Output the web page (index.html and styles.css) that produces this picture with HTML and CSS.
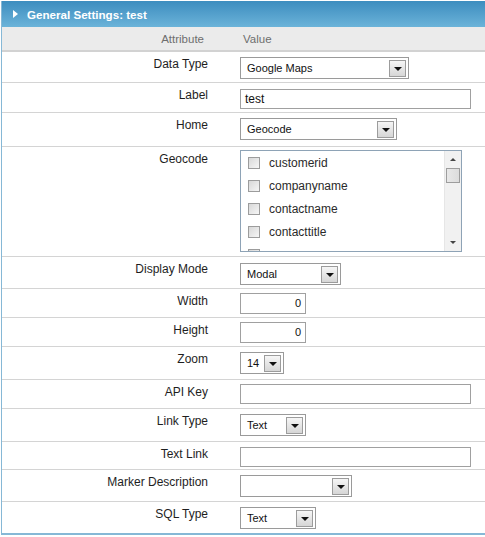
FILE: index.html
```html
<!DOCTYPE html>
<html>
<head>
<meta charset="utf-8">
<link rel="stylesheet" href="styles.css">
</head>
<body>
<div class="panel">
  <div class="panel-head"><span class="tri"></span><span class="title">General Settings: test</span></div>
  <div class="grid">
    <div class="row head">
      <div class="c1">Attribute</div><div class="c2">Value</div>
    </div>
    <div class="row h31">
      <div class="c1">Data Type</div>
      <div class="c2 t5"><div class="sel w169"><span class="sel-text">Google Maps</span><span class="arr"></span></div></div>
    </div>
    <div class="row h30">
      <div class="c1">Label</div>
      <div class="c2 t6"><div class="inp w231">test</div></div>
    </div>
    <div class="row h34">
      <div class="c1">Home</div>
      <div class="c2 t5"><div class="sel w157"><span class="sel-text">Geocode</span><span class="arr"></span></div></div>
    </div>
    <div class="row h110">
      <div class="c1">Geocode</div>
      <div class="c2 t3">
        <div class="listbox">
          <div class="items">
            <div class="item"><span class="cb"></span>customerid</div>
            <div class="item"><span class="cb"></span>companyname</div>
            <div class="item"><span class="cb"></span>contactname</div>
            <div class="item"><span class="cb"></span>contacttitle</div>
            <div class="item"><span class="cb"></span></div>
          </div>
          <div class="sbar">
            <span class="sb-up"></span>
            <span class="sb-thumb"></span>
            <span class="sb-fill"></span>
            <span class="sb-down"></span>
          </div>
        </div>
      </div>
    </div>
    <div class="row h32">
      <div class="c1">Display Mode</div>
      <div class="c2 t6"><div class="sel w101"><span class="sel-text">Modal</span><span class="arr"></span></div></div>
    </div>
    <div class="row h29">
      <div class="c1">Width</div>
      <div class="c2 t4"><div class="inp w66 num">0</div></div>
    </div>
    <div class="row h29">
      <div class="c1">Height</div>
      <div class="c2 t4"><div class="inp w66 num">0</div></div>
    </div>
    <div class="row h33">
      <div class="c1">Zoom</div>
      <div class="c2 t5"><div class="sel w44"><span class="sel-text">14</span><span class="arr"></span></div></div>
    </div>
    <div class="row h29">
      <div class="c1">API Key</div>
      <div class="c2 t4"><div class="inp w231"></div></div>
    </div>
    <div class="row h33">
      <div class="c1">Link Type</div>
      <div class="c2 t5"><div class="sel w66"><span class="sel-text">Text</span><span class="arr"></span></div></div>
    </div>
    <div class="row h28">
      <div class="c1">Text Link</div>
      <div class="c2 t5"><div class="inp w231"></div></div>
    </div>
    <div class="row h32">
      <div class="c1">Marker Description</div>
      <div class="c2 t5"><div class="sel w112"><span class="sel-text"></span><span class="arr"></span></div></div>
    </div>
    <div class="row h31 last">
      <div class="c1">SQL Type</div>
      <div class="c2 t5"><div class="sel w76"><span class="sel-text">Text</span><span class="arr"></span></div></div>
    </div>
  </div>
</div>
</body>
</html>
```
FILE: styles.css
```css
html, body {
  margin: 0;
  padding: 0;
  background: #ffffff;
  overflow: hidden;
}
body {
  font-family: "Liberation Sans", Arial, sans-serif;
  font-size: 12px;
  color: #222;
}
.panel {
  margin: 1px 0 0 1px;
  border-left: 1px solid #86b8d6;
  border-bottom: 2px solid #86b8d6;
}
.panel-head {
  height: 26px;
  display: flex;
  align-items: center;
  background: linear-gradient(#3d8dbf, #6bb3d9);
  color: #fff;
  font-weight: bold;
  font-size: 11.6px;
}
.tri {
  width: 0;
  height: 0;
  border-top: 4px solid transparent;
  border-bottom: 4px solid transparent;
  border-left: 5px solid #fff;
  margin: 0 9px 0 11px;
}
.grid {
  display: flex;
  flex-direction: column;
}
.row {
  display: flex;
  box-sizing: border-box;
  border-bottom: 1px solid #d4d4d4;
  line-height: 14px;
}
.row.last { border-bottom: none; }
.c1 {
  box-sizing: border-box;
  width: 230px;
  flex: none;
  text-align: right;
  padding: 5px 24px 0 0;
  color: #1e1e1e;
}
.c2 {
  flex: 1;
  padding-left: 8px;
}
.row.head {
  height: 25px;
  background: #ebebeb;
  border-bottom: 2px solid #d2d2d2;
  color: #6e6e6e;
  font-size: 11.5px;
  align-items: center;
}
.row.head .c1 {
  padding: 0 28px 0 0;
  color: #6e6e6e;
}
.row.head .c2 { padding-left: 11px; }
.t3 { padding-top: 3px; }
.t4 { padding-top: 4px; }
.t5 { padding-top: 5px; }
.t6 { padding-top: 6px; }
.h28 { height: 28px; }
.h29 { height: 29px; }
.h30 { height: 30px; }
.h31 { height: 31px; }
.h32 { height: 32px; }
.h33 { height: 33px; }
.h34 { height: 34px; }
.h110 { height: 110px; }

/* select box */
.sel {
  box-sizing: border-box;
  height: 22px;
  border: 1px solid #9a9a9a;
  background: #fff;
  display: flex;
  align-items: center;
  padding: 0 2px 0 6px;
  font-size: 11px;
  color: #111;
}
.sel-text { flex: 1; }
.arr {
  box-sizing: border-box;
  width: 17px;
  height: 17px;
  border: 1px solid #9c9c9c;
  background: linear-gradient(#f6f6f6, #d6d6d6);
  display: flex;
  align-items: center;
  justify-content: center;
}
.arr::after {
  content: "";
  width: 0;
  height: 0;
  border-left: 4px solid transparent;
  border-right: 4px solid transparent;
  border-top: 4px solid #111;
  margin-top: 1px;
}
.w44 { width: 44px; }
.w66 { width: 66px; }
.w76 { width: 76px; }
.w101 { width: 101px; }
.w112 { width: 112px; }
.w157 { width: 157px; }
.w169 { width: 169px; }
.w231 { width: 231px; }

/* input */
.inp {
  box-sizing: border-box;
  height: 20px;
  border: 1px solid #a0a0a0;
  background: #fff;
  padding: 0 4px;
  line-height: 18px;
  font-size: 12px;
  color: #111;
}
.inp.num {
  height: 21px;
  line-height: 19px;
  text-align: right;
  font-size: 11px;
}

/* listbox */
.listbox {
  box-sizing: border-box;
  width: 222px;
  height: 102px;
  border: 1px solid #8ea3b6;
  display: flex;
  overflow: hidden;
}
.items {
  flex: 1;
  padding-left: 7px;
  overflow: hidden;
}
.item {
  height: 23px;
  flex: none;
  display: flex;
  align-items: center;
  color: #2a2a2a;
  font-size: 12px;
}
.cb {
  box-sizing: border-box;
  width: 12px;
  height: 12px;
  border: 1px solid #9c9c9c;
  background: linear-gradient(135deg, #d8d8d8, #f6f6f6);
  margin-right: 9px;
}
.sbar {
  width: 16px;
  background: #f1f1f1;
  border-left: 1px solid #e6e6e6;
  display: flex;
  flex-direction: column;
  align-items: center;
}
.sb-up, .sb-down {
  height: 17px;
  width: 16px;
  display: flex;
  align-items: center;
  justify-content: center;
}
.sb-up::after {
  content: "";
  border-left: 3px solid transparent;
  border-right: 3px solid transparent;
  border-bottom: 3px solid #444;
}
.sb-down::after {
  content: "";
  border-left: 3px solid transparent;
  border-right: 3px solid transparent;
  border-top: 3px solid #444;
}
.sb-thumb {
  box-sizing: border-box;
  width: 14px;
  height: 15px;
  border: 1px solid #9d9d9d;
  background: linear-gradient(90deg, #e8e8e8, #dcdcdc);
}
.sb-fill { flex: 1; }
```
